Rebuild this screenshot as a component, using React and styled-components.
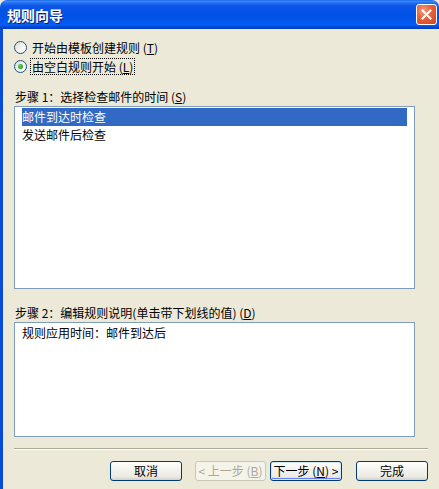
import React from "react";
import styled, { createGlobalStyle } from "styled-components";

const Global = createGlobalStyle`
  html, body { margin: 0; padding: 0; background: #ECE9D8; }
  body { font-family: "Noto Sans CJK SC", "Liberation Sans", sans-serif; font-size: 12px; }
  * { box-sizing: border-box; }
`;

const Window = styled.div`
  width: 439px;
  height: 489px;
  overflow: hidden;
  display: flex;
  flex-direction: column;
  background: #ECE9D8;
`;

const TitleBar = styled.div`
  height: 29px;
  flex: none;
  display: flex;
  align-items: center;
  justify-content: space-between;
  padding: 0 2px 0 7px;
  border-radius: 7px 7px 0 0;
  background: linear-gradient(
    to bottom,
    #0A5FE8 0px,
    #3D8BF7 1px,
    #2670F0 3px,
    #0A55E6 6px,
    #0152E6 14px,
    #0257EE 22px,
    #0560F4 25px,
    #0047D0 27px,
    #003DB8 29px
  );
`;

const Title = styled.div`
  color: #fff;
  font-weight: bold;
  font-size: 14px;
  letter-spacing: 0px;
  text-shadow: 1px 1px 0 #0A1F7A;
  line-height: 16px;
  padding-top: 1px;
`;

const CloseButton = styled.div`
  width: 21px;
  height: 21px;
  border: 1px solid #fff;
  border-radius: 3px;
  background: radial-gradient(circle at 35% 30%, #F4A283 0%, #E6643E 40%, #CC4420 100%);
  display: flex;
  align-items: center;
  justify-content: center;
`;

const Body = styled.div`
  flex: 1;
  display: flex;
  border-left: 3px solid #0A4CD8;
`;

const Content = styled.div`
  flex: 1;
  display: flex;
  flex-direction: column;
  padding: 9px 11px 0 11px;
  color: #000;
`;

const RadioRow = styled.div`
  display: flex;
  align-items: center;
  height: 19px;
`;

const RadioCircle = styled.div`
  width: 13px;
  height: 13px;
  border-radius: 50%;
  border: 1px solid #1C5180;
  background: linear-gradient(135deg, #DCDCD3 0%, #FFFFFF 80%);
  margin: 0 3px 0 0;
  display: flex;
  align-items: center;
  justify-content: center;
  flex: none;
`;

const RadioDot = styled.div`
  width: 5px;
  height: 5px;
  border-radius: 50%;
  background: radial-gradient(circle at 40% 40%, #6CD46C 0%, #21A121 70%, #1A8A1A 100%);
`;

const RadioLabel = styled.span`
  line-height: 15px;
  padding: 0 1px;
  border: 1px dotted ${(p) => (p.$focused ? "#000" : "transparent")};
`;

const StepLabel = styled.div`
  line-height: 14px;
  margin-top: ${(p) => p.$mt}px;
  margin-left: 1px;
`;

const Box = styled.div`
  width: 401px;
  height: ${(p) => p.$h}px;
  margin-top: 2px;
  background: #fff;
  border: 1px solid #7F9DB9;
  padding: 1px 7px;
  flex: none;
`;

const ListItem = styled.div`
  height: 18px;
  line-height: 18px;
  background: ${(p) => (p.$selected ? "#316AC5" : "transparent")};
  color: ${(p) => (p.$selected ? "#fff" : "#000")};
`;

const DescText = styled.div`
  line-height: 18px;
`;

const Separator = styled.div`
  width: 414px;
  margin-top: 11px;
  height: 2px;
  border-top: 1px solid #ACA899;
  border-bottom: 1px solid #fff;
  flex: none;
`;

const ButtonRow = styled.div`
  display: flex;
  justify-content: flex-end;
  margin-top: 11px;
`;

const Button = styled.div`
  width: ${(p) => p.$w}px;
  height: 20px;
  margin-left: ${(p) => p.$ml}px;
  border: 1px solid ${(p) => (p.$disabled ? "#C9C7BA" : "#003C74")};
  border-radius: 3px;
  display: flex;
  align-items: center;
  justify-content: center;
  line-height: 14px;
  color: ${(p) => (p.$disabled ? "#ACA899" : "#000")};
  background: ${(p) =>
    p.$disabled
      ? "#F5F4EA"
      : "linear-gradient(to bottom, #FFFFFF 0%, #F4F3EE 40%, #ECEBE6 80%, #D6D0C5 100%)"};
  box-shadow: ${(p) =>
    p.$default ? "inset 0 0 0 1px #CEE7FF, inset 0 -1px 0 1px #6982EE" : "none"};
  white-space: pre;
`;

export default function App() {
  return (
    <>
      <Global />
      <Window>
        <TitleBar>
          <Title>规则向导</Title>
          <CloseButton>
            <svg width="11" height="11" viewBox="0 0 11 11">
              <path d="M1.5 1.5 L9.5 9.5 M9.5 1.5 L1.5 9.5" stroke="#fff" strokeWidth="2" strokeLinecap="square" />
            </svg>
          </CloseButton>
        </TitleBar>
        <Body>
          <Content>
            <RadioRow>
              <RadioCircle />
              <RadioLabel>
                开始由模板创建规则 (<u>T</u>)
              </RadioLabel>
            </RadioRow>
            <RadioRow>
              <RadioCircle>
                <RadioDot />
              </RadioCircle>
              <RadioLabel $focused>
                由空白规则开始 (<u>L</u>)
              </RadioLabel>
            </RadioRow>
            <StepLabel $mt={14}>
              步骤 1：选择检查邮件的时间 (<u>S</u>)
            </StepLabel>
            <Box $h={183}>
              <ListItem $selected>邮件到达时检查</ListItem>
              <ListItem>发送邮件后检查</ListItem>
            </Box>
            <StepLabel $mt={17}>
              步骤 2：编辑规则说明(单击带下划线的值) (<u>D</u>)
            </StepLabel>
            <Box $h={115}>
              <DescText>规则应用时间：邮件到达后</DescText>
            </Box>
            <Separator />
            <ButtonRow>
              <Button $w={72} $ml={0}>取消</Button>
              <Button $w={71} $ml={13} $disabled>
                {"< 上一步 ("}<u>B</u>{")"}
              </Button>
              <Button $w={72} $ml={4} $default>
                {"下一步 ("}<u>N</u>{") >"}
              </Button>
              <Button $w={72} $ml={14}>完成</Button>
            </ButtonRow>
          </Content>
        </Body>
      </Window>
    </>
  );
}
